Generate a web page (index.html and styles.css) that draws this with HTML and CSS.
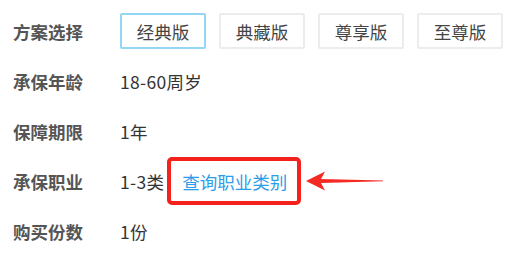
FILE: index.html
```html
<!DOCTYPE html>
<html lang="zh-CN">
<head>
<meta charset="utf-8">
<link rel="stylesheet" href="styles.css">
</head>
<body>
<div class="form">
  <div class="row">
    <div class="label">方案选择</div>
    <div class="options">
      <div class="opt active">经典版</div>
      <div class="opt">典藏版</div>
      <div class="opt">尊享版</div>
      <div class="opt">至尊版</div>
    </div>
  </div>
  <div class="row">
    <div class="label">承保年龄</div>
    <div class="value">18-60周岁</div>
  </div>
  <div class="row">
    <div class="label">保障期限</div>
    <div class="value">1年</div>
  </div>
  <div class="row">
    <div class="label">承保职业</div>
    <div class="value">1-3类</div>
    <div class="hl"><span class="link">查询职业类别</span></div>
    <svg class="arrow" width="78" height="22" viewBox="0 0 78 22">
      <polygon points="0,11 19,1.5 15,9 77,10.4 77,11.2 15,13 19,20.5" fill="#f52a22"/>
    </svg>
  </div>
  <div class="row">
    <div class="label">购买份数</div>
    <div class="value">1份</div>
  </div>
</div>
</body>
</html>
```
FILE: styles.css
```css
html, body {
  margin: 0;
  padding: 0;
  background: #fff;
}
body {
  font-family: "Noto Sans CJK SC", "Noto Sans", sans-serif;
  font-size: 17.5px;
}
.form {
  padding-top: 6px;
  padding-left: 13px;
}
.row {
  display: flex;
  align-items: center;
  height: 50px;
}
.label {
  width: 107px;
  color: #555;
  font-weight: bold;
  flex: none;
}
.value {
  color: #333;
  letter-spacing: 0.3px;
}
.options {
  display: flex;
  gap: 13px;
}
.opt {
  box-sizing: border-box;
  width: 86px;
  height: 36px;
  border: 2px solid #ececec;
  border-radius: 2px;
  display: flex;
  align-items: center;
  justify-content: center;
  color: #444;
}
.opt.active {
  border-color: #92d6f4;
}
.hl {
  box-sizing: border-box;
  margin-left: 3px;
  height: 48px;
  border: 4px solid #f5211c;
  border-radius: 5px;
  display: flex;
  align-items: center;
  padding: 0 10px 0 11px;
}
.link {
  color: #2c9de8;
}
.arrow {
  margin-left: 5px;
  display: block;
}
```
